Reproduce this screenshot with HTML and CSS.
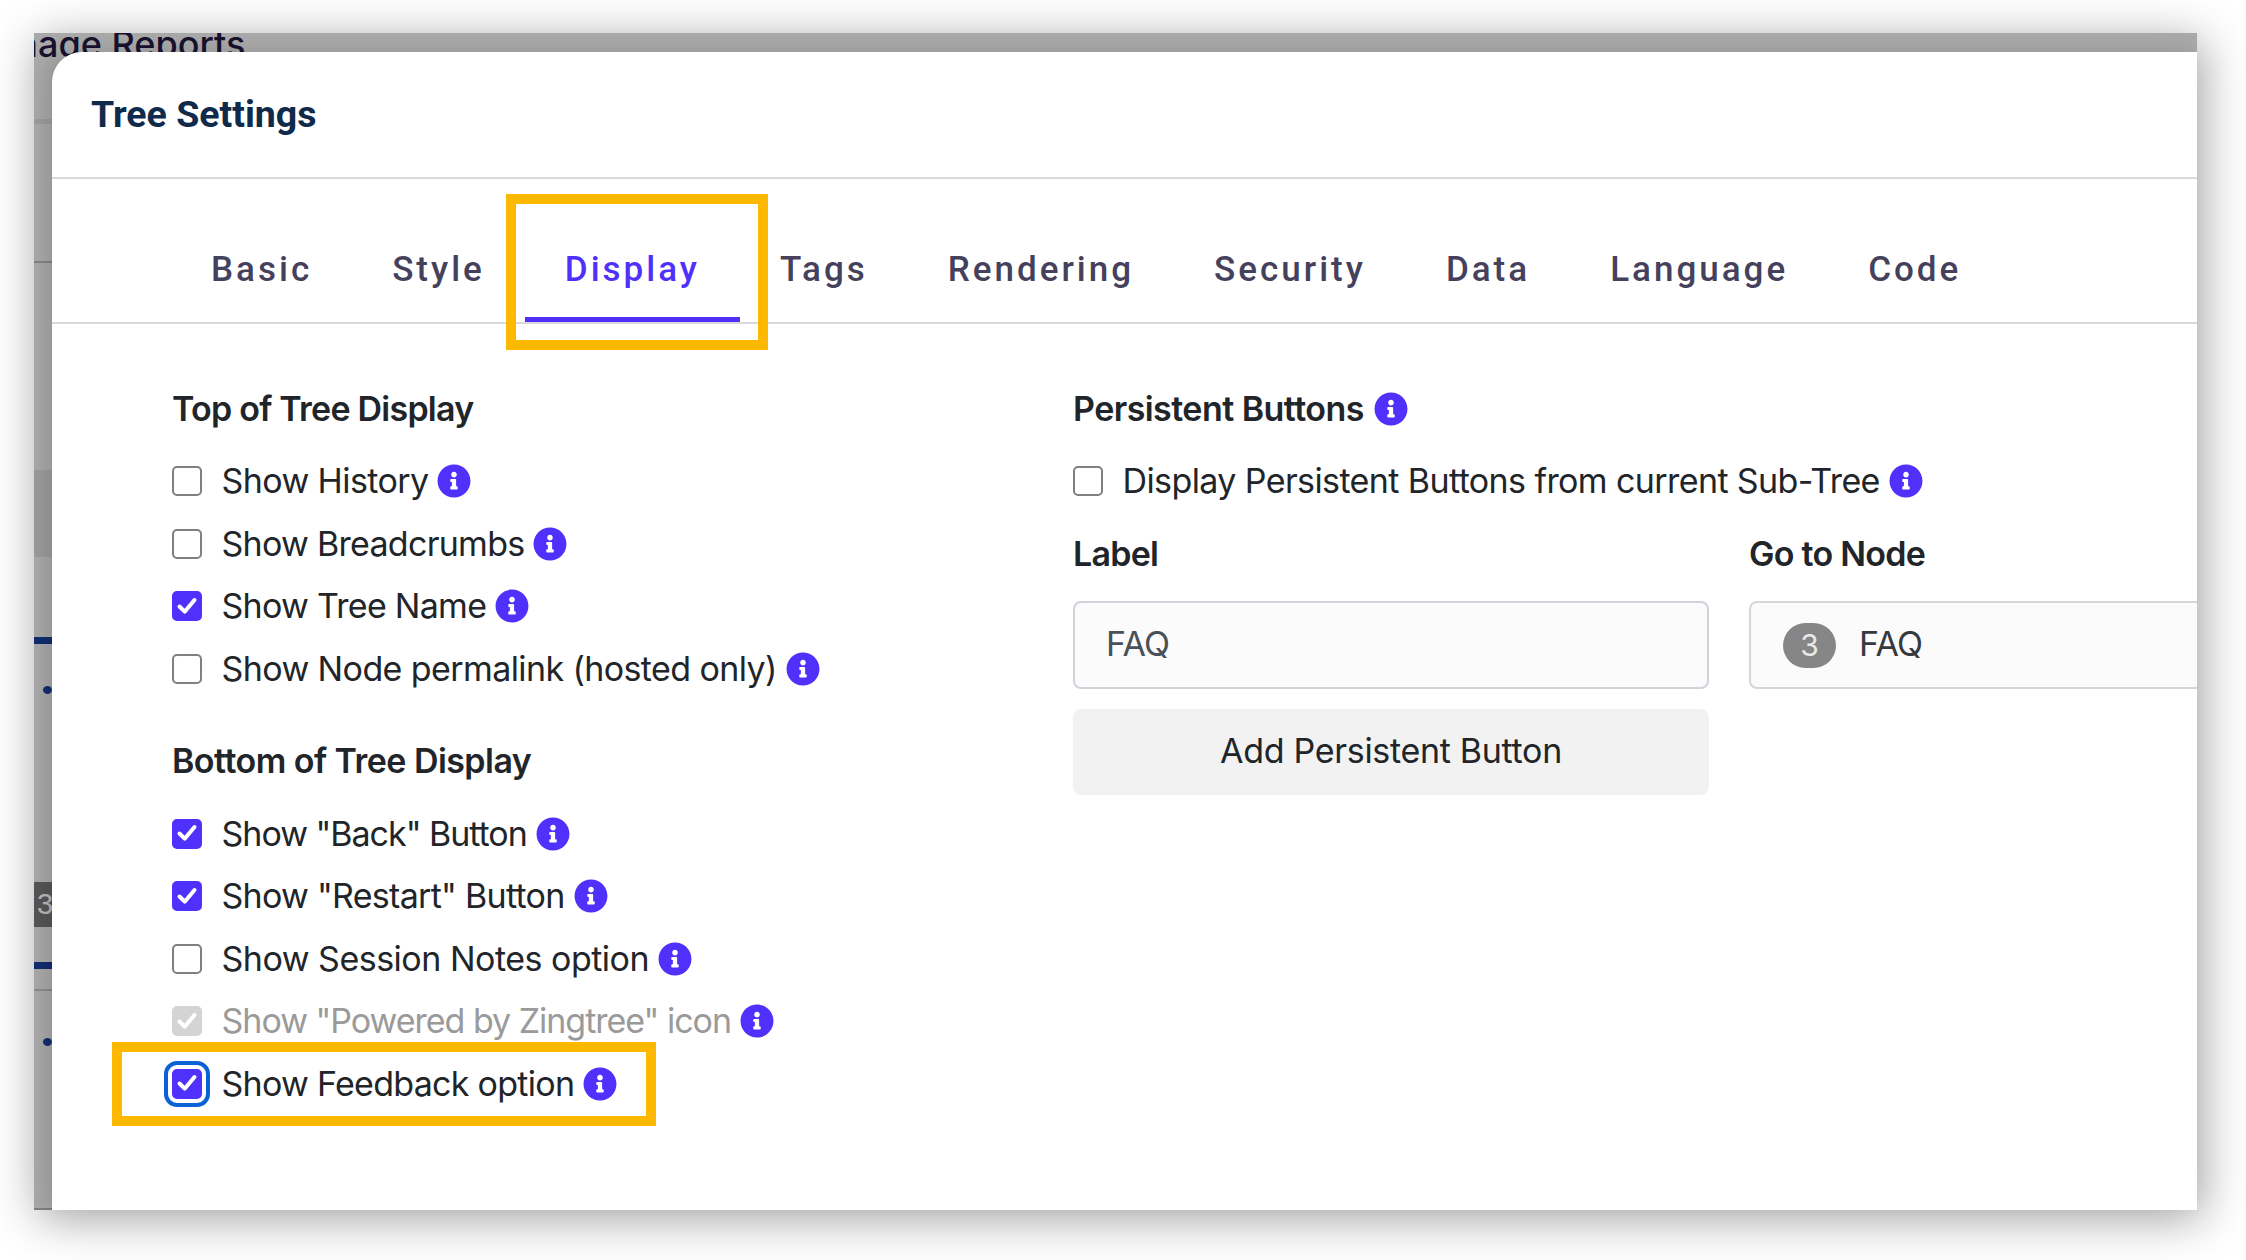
FILE: index.html
```html
<!DOCTYPE html>
<html lang="en">
<head>
<meta charset="utf-8">
<title>Tree Settings</title>
<link rel="stylesheet" href="styles.css">
</head>
<body>
<svg class="defs" width="0" height="0" aria-hidden="true">
  <symbol id="info" viewBox="0 0 512 512"><path fill="currentColor" d="M256 8C119.043 8 8 119.083 8 256c0 136.997 111.043 248 248 248s248-111.003 248-248C504 119.083 392.957 8 256 8zm0 110c23.196 0 42 18.804 42 42s-18.804 42-42 42-42-18.804-42-42 18.804-42 42-42zm56 254c0 6.627-5.373 12-12 12h-88c-6.627 0-12-5.373-12-12v-24c0-6.627 5.373-12 12-12h12v-64h-12c-6.627 0-12-5.373-12-12v-24c0-6.627 5.373-12 12-12h64c6.627 0 12 5.373 12 12v100h12c6.627 0 12 5.373 12 12v24z"/></symbol>
  <symbol id="tick" viewBox="0 0 30 30"><path fill="none" stroke="#fff" stroke-width="4" stroke-linecap="round" stroke-linejoin="round" d="M7.5 15.5l5.2 5.2L22.5 9"/></symbol>
</svg>
<div class="frame">
  <div class="backdrop">
    <div class="bd-title">Manage Reports</div>
    <div class="bd-line bd-line-1"></div>
    <div class="bd-line bd-line-2"></div>
    <div class="bd-band"><span class="bd-speck"></span></div>
    <div class="bd-bar bd-bar-1"></div>
    <div class="bd-dot bd-dot-1"></div>
    <div class="bd-badge">3</div>
    <div class="bd-bar bd-bar-2"></div>
    <div class="bd-line bd-line-3"></div>
    <div class="bd-dot bd-dot-2"></div>
    <div class="bd-line bd-line-4"></div>
  </div>
  <div class="modal">
    <header class="modal-head"><h1>Tree Settings</h1></header>
    <nav class="tabs">
      <a class="tab">Basic</a>
      <a class="tab">Style</a>
      <a class="tab active">Display</a>
      <a class="tab">Tags</a>
      <a class="tab">Rendering</a>
      <a class="tab">Security</a>
      <a class="tab">Data</a>
      <a class="tab">Language</a>
      <a class="tab">Code</a>
    </nav>
    <div class="callout callout-tab"></div>
    <div class="body">
      <section class="col-left">
        <h2 class="h-top">Top of Tree Display</h2>
        <div class="opts">
          <div class="opt"><span class="box"></span><span>Show History</span><svg class="info"><use href="#info"/></svg></div>
          <div class="opt"><span class="box"></span><span class="snug">Show Breadcrumbs</span><svg class="info"><use href="#info"/></svg></div>
          <div class="opt"><span class="box on"><svg><use href="#tick"/></svg></span><span class="snug">Show Tree Name</span><svg class="info"><use href="#info"/></svg></div>
          <div class="opt"><span class="box"></span><span>Show Node permalink (hosted only)</span><svg class="info"><use href="#info"/></svg></div>
        </div>
        <h2 class="h-bottom">Bottom of Tree Display</h2>
        <div class="opts">
          <div class="opt"><span class="box on"><svg><use href="#tick"/></svg></span><span class="quoted">Show "Back" Button</span><svg class="info"><use href="#info"/></svg></div>
          <div class="opt"><span class="box on"><svg><use href="#tick"/></svg></span><span class="snug">Show "Restart" Button</span><svg class="info"><use href="#info"/></svg></div>
          <div class="opt"><span class="box"></span><span class="loose">Show Session Notes option</span><svg class="info"><use href="#info"/></svg></div>
          <div class="opt disabled"><span class="box off"><svg><use href="#tick"/></svg></span><span class="quoted">Show "Powered by Zingtree" icon</span><svg class="info"><use href="#info"/></svg></div>
          <div class="opt feedback">
            <div class="callout callout-opt"></div>
            <span class="box on focus"><svg><use href="#tick"/></svg></span><span class="snug">Show Feedback option</span><svg class="info"><use href="#info"/></svg>
          </div>
        </div>
      </section>
      <section class="col-right">
        <h2 class="h-inline">Persistent Buttons<svg class="info"><use href="#info"/></svg></h2>
        <div class="opt"><span class="box"></span><span>Display Persistent Buttons from current Sub-Tree</span><svg class="info"><use href="#info"/></svg></div>
        <div class="fields">
          <div class="field">
            <h3>Label</h3>
            <div class="input label-input">FAQ</div>
            <div class="btn">Add Persistent Button</div>
          </div>
          <div class="field">
            <h3>Go to Node</h3>
            <div class="input node-input"><span class="pill">3</span><span class="node-text">FAQ</span></div>
          </div>
        </div>
      </section>
    </div>
  </div>
</div>
</body>
</html>
```
FILE: styles.css
```css
* { box-sizing: border-box; }
html, body { margin: 0; padding: 0; background: #fff; }
body { width: 2246px; height: 1260px; overflow: hidden; font-family: "Inter", "Liberation Sans", sans-serif; color: #212529; }
.defs { position: absolute; }

.frame {
  position: relative;
  width: 2163px;
  height: 1177px;
  margin: 33px 0 0 34px;
  padding: 19px 0 0 18px;
  background: #a9a9a9;
  box-shadow: 5px 8px 44px rgba(0, 0, 0, .38);
  overflow: hidden;
}
.backdrop { position: absolute; inset: 0; overflow: hidden; }
.bd-title {
  height: 60px;
  margin: -19px 0 0 -71px;
  font: 500 36px/60px "Inter", sans-serif;
  color: #17112e;
  white-space: nowrap;
}
.bd-line { height: 5px; background: #9c9c9c; }
.bd-line-1 { margin-top: 45px; }
.bd-line-2 { margin-top: 137px; height: 2px; background: #838383; }
.bd-band { display: flex; justify-content: flex-end; height: 87px; margin-top: 207px; padding-top: 25px; background: #9c9c9c; }
.bd-speck { width: 3px; height: 5px; background: #222; }
.bd-bar { height: 7px; background: #122c6e; }
.bd-bar-1 { margin-top: 80px; }
.bd-dot { width: 9px; height: 8px; margin-left: 9px; border-radius: 50%; background: #122c6e; }
.bd-dot-1 { margin-top: 42px; }
.bd-badge {
  height: 45px;
  margin-top: 188px;
  padding-left: 3px;
  background: #555;
  color: #b8b8b8;
  font: 400 29px/45px "Liberation Sans", sans-serif;
  border-radius: 0 4px 4px 0;
}
.bd-bar-2 { margin-top: 35px; }
.bd-line-3 { margin-top: 20px; height: 2px; background: #8a8a8a; }
.bd-dot-2 { margin-top: 47px; }
.bd-line-4 { margin-top: 162px; height: 2px; background: #7f7f7f; }

.modal {
  position: relative;
  height: 1158px;
  overflow: hidden;
  background: #fff;
  border-top-left-radius: 30px;
  box-shadow: -6px 0 20px rgba(0, 0, 0, .14);
}
.modal-head { height: 125px; padding: 40px 39px 0; }
.modal-head h1 { margin: 0; font: 700 37.5px/44px "Roboto", sans-serif; color: #0f2a4a; }

.tabs {
  display: flex;
  height: 147px;
  padding-left: 119px;
  border-top: 2px solid #d9d9d9;
  border-bottom: 2px solid #d9d9d9;
}
.tab {
  height: 145px;
  padding: 68px 40px 0;
  font: 500 35px/46px "Roboto", sans-serif;
  letter-spacing: 3px;
  color: #45415d;
  white-space: nowrap;
}
.tab.active { color: #5030fb; border-bottom: 5px solid #5030fb; height: 143px; }

.callout { position: absolute; border: 10px solid #fdb900; pointer-events: none; }
.callout-tab { left: 454px; top: 142px; width: 262px; height: 156px; }
.callout-opt { left: -60px; top: -18px; width: 544px; height: 84px; }

.body { display: grid; grid-template-columns: 901px 1fr; padding: 63px 0 0 120px; }
h2, h3 { margin: 0; font: 600 34px/44px "Inter", sans-serif; letter-spacing: -.55px; color: #212529; }
h3 { letter-spacing: -.75px; }
.h-top { letter-spacing: -.77px; }
.h-inline { display: flex; align-items: center; }
.h-inline .info { margin-left: 10px; }
.h-bottom { margin-top: 46px; }
.h-bottom + .opts { margin-top: 27px; }

.opts { display: flex; flex-direction: column; gap: 14.5px; margin-top: 26px; }
.opt { position: relative; display: flex; align-items: center; height: 48px; font-size: 34px; letter-spacing: -.6px; line-height: 48px; white-space: nowrap; }
.col-right .opt { margin-top: 26px; }
.opt > span:nth-of-type(2) { margin-left: 19.5px; }
.snug { letter-spacing: -.72px; }
.loose { letter-spacing: -.5px; }
.quoted { letter-spacing: -1.02px; }
.info { width: 34px; height: 34px; margin-left: 9px; flex: none; color: #5030fb; }

.box { position: relative; width: 30px; height: 30px; flex: none; border: 2.5px solid #808080; border-radius: 5px; background: #fff; }
.box svg { position: absolute; left: -2.5px; top: -2.5px; width: 30px; height: 30px; }
.box.on { background: #5030fb; border-color: #5030fb; }
.box.off { background: #d4d4d4; border-color: #d4d4d4; }
.box.focus { outline: 4px solid #0b62d6; outline-offset: 4px; }
.disabled { color: #9a9a9a; }

.fields { display: grid; grid-template-columns: 636px 700px; column-gap: 40px; margin-top: 27px; }
.field h3 { height: 44px; }
.input { height: 88px; margin-top: 25px; border: 2px solid #ced4da; border-radius: 8px; background: #fbfbfb; font-size: 34px; letter-spacing: -.6px; line-height: 82px; color: #495057; }
.label-input { padding-left: 31px; }
.node-input { display: flex; align-items: center; gap: 23px; padding-left: 32px; border-color: #d6d6d6; color: #343a40; }
.node-text { margin-bottom: 3px; }
.pill { width: 53px; height: 45px; border-radius: 23px; background: #868686; color: #e9e9e9; font-size: 30px; letter-spacing: 0; line-height: 45px; text-align: center; }
.btn { height: 86px; margin-top: 20px; border-radius: 8px; background: #f2f2f2; font-size: 34px; letter-spacing: -.3px; line-height: 84px; text-align: center; color: #212529; }
```
